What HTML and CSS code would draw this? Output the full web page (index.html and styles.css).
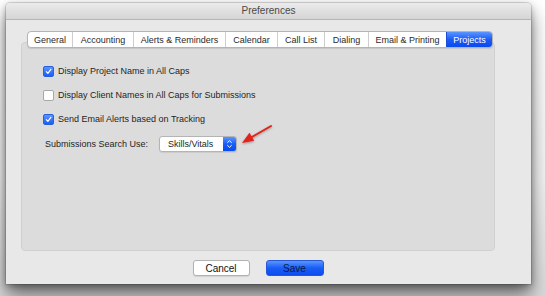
FILE: index.html
```html
<!DOCTYPE html>
<html>
<head>
<meta charset="utf-8">
<link rel="stylesheet" href="styles.css">
</head>
<body>
<div class="stage">
  <div class="window">
    <div class="titlebar">Preferences</div>
    <div class="body">
      <div class="tabs">
        <div class="tab">General</div>
        <div class="tab">Accounting</div>
        <div class="tab">Alerts &amp; Reminders</div>
        <div class="tab">Calendar</div>
        <div class="tab">Call List</div>
        <div class="tab">Dialing</div>
        <div class="tab">Email &amp; Printing</div>
        <div class="tab active">Projects</div>
      </div>
      <div class="pane">
        <label class="row"><span class="cb on"><svg viewBox="0 0 10 10"><path d="M2.6 5.2 L4.3 7.1 L7.6 2.6" fill="none" stroke="#fff" stroke-width="1.3" stroke-linecap="round" stroke-linejoin="round"/></svg></span>Display Project Name in All Caps</label>
        <label class="row"><span class="cb"></span>Display Client Names in All Caps for Submissions</label>
        <label class="row"><span class="cb on"><svg viewBox="0 0 10 10"><path d="M2.6 5.2 L4.3 7.1 L7.6 2.6" fill="none" stroke="#fff" stroke-width="1.3" stroke-linecap="round" stroke-linejoin="round"/></svg></span>Send Email Alerts based on Tracking</label>
        <div class="selrow">
          <span class="sellabel">Submissions Search Use:</span>
          <div class="select"><span class="selval">Skills/Vitals</span><span class="stepper"><svg viewBox="0 0 13 16"><path d="M4.3 6.3 L6.5 4.2 L8.7 6.3 M4.3 9.7 L6.5 11.8 L8.7 9.7" fill="none" stroke="#fff" stroke-width="1.1" stroke-linecap="round" stroke-linejoin="round"/></svg></span></div>
        </div>
      </div>
      <div class="buttons">
        <div class="btn cancel">Cancel</div>
        <div class="btn save">Save</div>
      </div>
    </div>
  </div>
  <svg class="arrow" viewBox="0 0 40 26" width="40" height="26">
    <defs><filter id="sh" x="-20%" y="-20%" width="140%" height="160%"><feDropShadow dx="0" dy="1" stdDeviation="0.8" flood-color="#000" flood-opacity="0.35"/></filter></defs>
    <g filter="url(#sh)">
      <path d="M33 2 L13 13.5" stroke="#e3201b" stroke-width="2" stroke-linecap="round"/>
      <path d="M4 19 L11.5 8.8 L16.2 16.8 Z" fill="#e3201b"/>
    </g>
  </svg>
</div>
</body>
</html>
```

FILE: styles.css
```css
html, body {
  margin: 0;
  padding: 0;
  background: #ffffff;
}
body {
  font-family: "Liberation Sans", Arial, sans-serif;
  font-size: 9px;
  color: #222;
}
.stage {
  position: relative;
  width: 545px;
  height: 296px;
  padding: 3px 14px 0 6px;
  box-sizing: border-box;
  background: linear-gradient(#ffffff, #f2f2f2 60%, #d8d8d8);
  overflow: hidden;
}
.window {
  width: 525px;
  height: 281px;
  display: flex;
  flex-direction: column;
  background: #e8e8e8;
  border-radius: 4px 4px 0 0;
  box-shadow: 0 0 0 1px rgba(0,0,0,0.12), 0 10px 18px rgba(0,0,0,0.55), 0 2px 6px rgba(0,0,0,0.25);
}
.titlebar {
  height: 16px;
  line-height: 16px;
  text-align: center;
  font-size: 10px;
  color: #4a4a4a;
  background: linear-gradient(#ebebeb, #d5d5d5);
  border-bottom: 1px solid #b5b5b5;
  border-radius: 4px 4px 0 0;
  flex: none;
}
.body {
  flex: 1;
  display: flex;
  flex-direction: column;
  padding: 11px 36px 10px 15px;
}
.tabs {
  position: relative;
  z-index: 1;
  display: flex;
  align-self: center;
  margin-left: 4px;
  height: 17px;
  background: #fff;
  border: 1px solid #b4b4b4;
  border-radius: 4px;
  box-sizing: border-box;
  box-shadow: 0 1px 1px rgba(0,0,0,0.1);
  overflow: hidden;
}
.tab {
  display: flex;
  align-items: center;
  justify-content: center;
  height: 15px;
  border-left: 1px solid #cdcdcd;
  color: #2a2a2a;
  box-sizing: border-box;
}
.tab:first-child { border-left: none; width: 44px; }
.tab:nth-child(2) { width: 61px; }
.tab:nth-child(3) { width: 92px; }
.tab:nth-child(4) { width: 52px; }
.tab:nth-child(5) { width: 47px; }
.tab:nth-child(6) { width: 44px; }
.tab:nth-child(7) { width: 78px; }
.tab:nth-child(8) { width: 46px; }
.tab.active {
  background: linear-gradient(#5a95ff, #1b5cf6 50%, #0a49ef);
  color: #fff;
  border-left-color: #1b4fd0;
}
.pane {
  margin-top: -6px;
  height: 209px;
  box-sizing: border-box;
  background: #dcdcdc;
  border: 1px solid #d0d0d0;
  border-radius: 4px;
  padding: 19px 0 0 21px;
  display: flex;
  flex-direction: column;
}
.row {
  display: flex;
  align-items: center;
  height: 18px;
  margin-bottom: 6px;
  color: #1e1e1e;
}
.cb {
  width: 11px;
  height: 11px;
  box-sizing: border-box;
  border-radius: 2px;
  background: #fff;
  border: 1px solid #a8a8a8;
  margin-right: 4px;
  display: flex;
}
.cb.on {
  background: linear-gradient(#5a95ff, #1a5df6);
  border-color: #2a5fd8;
}
.cb svg { width: 9px; height: 9px; }
.selrow {
  display: flex;
  align-items: center;
  height: 18px;
  margin-top: 1px;
  padding-left: 2px;
}
.sellabel {
  width: 114px;
  color: #1e1e1e;
}
.select {
  display: flex;
  width: 78px;
  height: 16px;
  box-sizing: border-box;
  background: #fff;
  border: 1px solid #b4b4b4;
  border-radius: 3px;
  overflow: hidden;
  box-shadow: 0 1px 1px rgba(0,0,0,0.08);
}
.selval {
  flex: 1;
  display: flex;
  align-items: center;
  padding-left: 8px;
  color: #1e1e1e;
}
.stepper {
  width: 13px;
  background: linear-gradient(#5a95ff, #1a5df6 50%, #0a49ef);
  display: flex;
}
.stepper svg { width: 13px; height: 14px; }
.buttons {
  display: flex;
  justify-content: center;
  gap: 16px;
  margin-top: 9px;
  padding-right: 0;
}
.btn {
  height: 16px;
  box-sizing: border-box;
  border-radius: 3px;
  display: flex;
  align-items: center;
  justify-content: center;
  font-size: 10px;
  color: #111;
}
.cancel {
  width: 57px;
  background: #fff;
  border: 1px solid #b2b2b2;
  box-shadow: 0 1px 1px rgba(0,0,0,0.1);
}
.save {
  width: 58px;
  background: linear-gradient(#5a95ff, #1a5df6 50%, #0b4cf0);
  border: 1px solid #2857d6;
  color: #0a1a40;
}
.arrow {
  position: absolute;
  left: 238px;
  top: 124px;
}
```
